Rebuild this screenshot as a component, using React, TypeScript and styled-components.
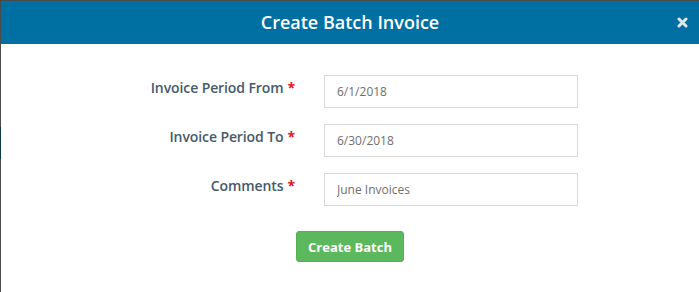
import React from "react";
import styled, { createGlobalStyle } from "styled-components";

const Global = createGlobalStyle`
  html, body { margin: 0; padding: 0; background: #fff; }
  body { font-family: "Open Sans", "Liberation Sans", sans-serif; }
  * { box-sizing: border-box; }
`;

const Backdrop = styled.div`
  width: 699px;
  height: 292px;
  background: #4b4b4b;
  padding: 1px 0 0 1px;
  position: relative;
  overflow: hidden;
`;

const EdgeStrip = styled.div`
  position: absolute;
  left: 0;
  top: 127px;
  width: 1px;
  height: 32px;
  background: #0e3a45;
`;

const Modal = styled.div`
  background: #fff;
  height: 100%;
  display: flex;
  flex-direction: column;
`;

const Header = styled.div`
  height: 43px;
  background: #0070a2;
  display: flex;
  align-items: center;
  justify-content: center;
  position: relative;
`;

const Title = styled.h4`
  margin: 0;
  color: #fff;
  font-size: 18px;
  font-weight: 600;
  line-height: 1;
  padding-bottom: 1px;
`;

const Close = styled.button`
  position: absolute;
  right: 11px;
  top: 16px;
  width: 11px;
  height: 11px;
  padding: 0;
  border: 0;
  background: transparent;
  display: flex;
  cursor: pointer;
`;

const Body = styled.div`
  padding: 31px 0 0 0;
  display: flex;
  flex-direction: column;
`;

const Row = styled.div`
  display: grid;
  grid-template-columns: 308px 284px;
  margin-bottom: 16px;
`;

const Label = styled.label`
  text-align: right;
  padding: 3px 14px 0 0;
  font-size: 14px;
  font-weight: 600;
  color: #45596b;
  line-height: 20px;
  letter-spacing: -0.1px;
`;

const Req = styled.span`
  color: #e8141c;
  font-weight: 700;
  margin-left: 4px;
`;

const Field = styled.div`
  padding: 0 15px;
`;

const Input = styled.input`
  width: 254px;
  height: 33px;
  border: 1px solid #d9d9d9;
  border-radius: 0;
  padding: 0 12px;
  font-family: "Open Sans", "Liberation Sans", sans-serif;
  font-size: 12px;
  color: #707070;
  background: #fff;
  outline: none;
`;

const Actions = styled.div`
  display: flex;
  justify-content: center;
  padding-top: 9px;
`;

const Button = styled.button`
  width: 108px;
  height: 31px;
  background: #5cb85c;
  border: 1px solid #55b055;
  border-radius: 3px;
  color: #fff;
  font-family: "Open Sans", "Liberation Sans", sans-serif;
  font-size: 13px;
  font-weight: 700;
  padding: 0;
`;

const fields = [
  { label: "Invoice Period From", value: "6/1/2018" },
  { label: "Invoice Period To", value: "6/30/2018" },
  { label: "Comments", value: "June Invoices" },
];

export default function App() {
  return (
    <>
      <Global />
      <Backdrop>
        <EdgeStrip />
        <Modal>
          <Header>
            <Title>Create Batch Invoice</Title>
            <Close aria-label="Close">
              <svg width="11" height="11" viewBox="0 0 11 11">
                <path
                  d="M2 2 L9 9 M9 2 L2 9"
                  stroke="#dfe8ef"
                  strokeWidth="3"
                  strokeLinecap="round"
                />
              </svg>
            </Close>
          </Header>
          <Body>
            {fields.map((f) => (
              <Row key={f.label}>
                <Label>
                  {f.label}
                  <Req>*</Req>
                </Label>
                <Field>
                  <Input defaultValue={f.value} />
                </Field>
              </Row>
            ))}
            <Actions>
              <Button>Create Batch</Button>
            </Actions>
          </Body>
        </Modal>
      </Backdrop>
    </>
  );
}
